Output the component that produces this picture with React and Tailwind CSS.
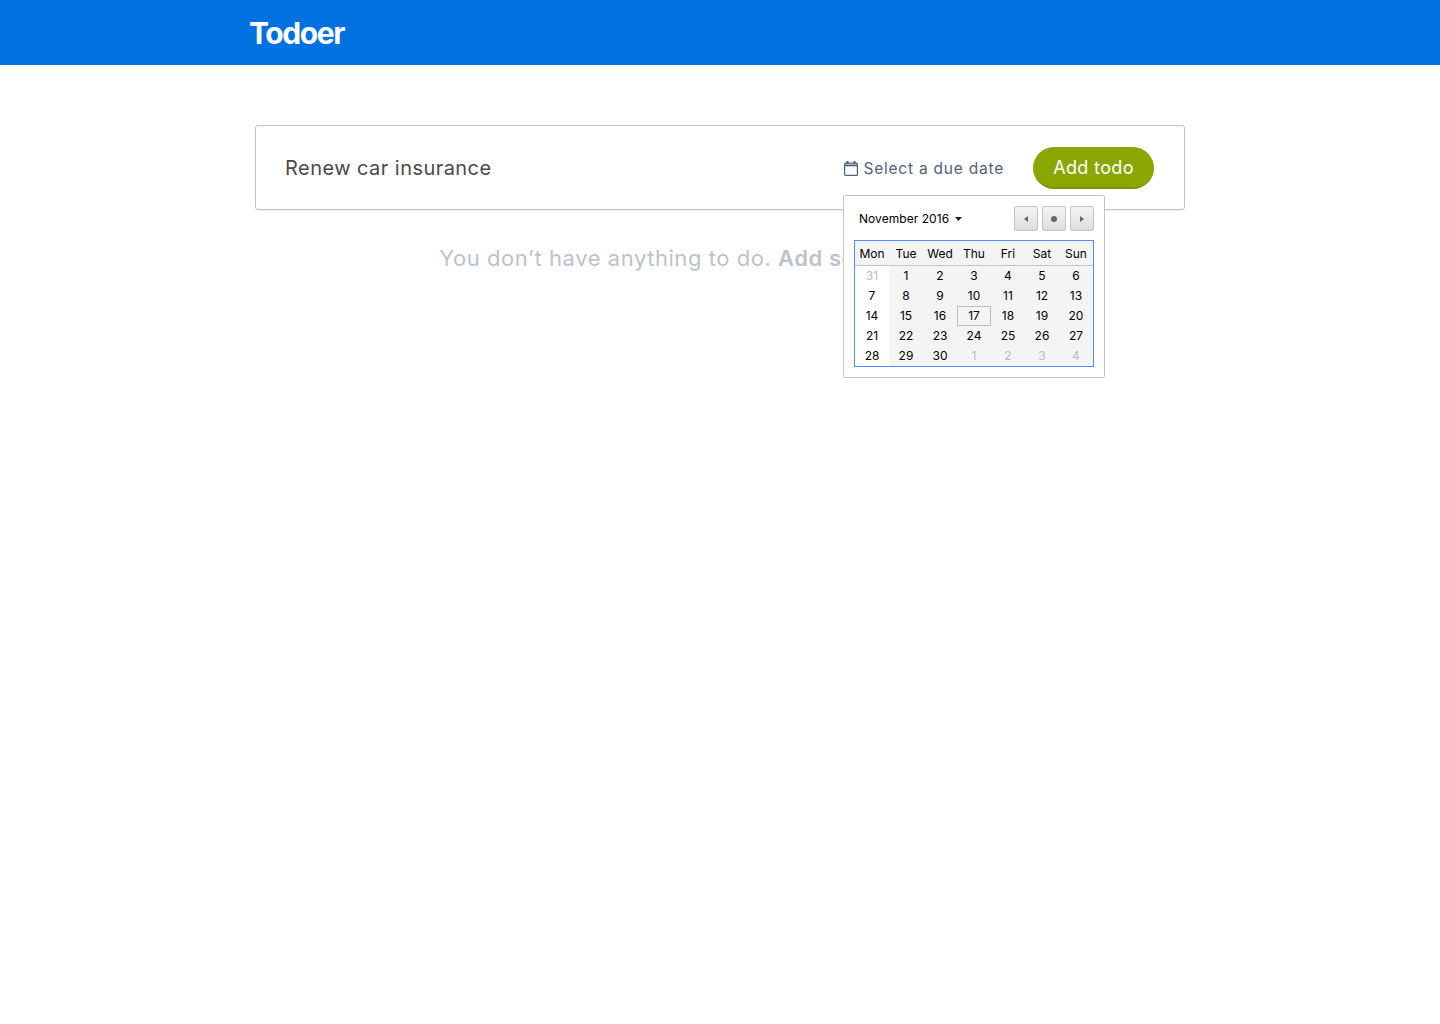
const sans = "font-['Inter','Noto_Sans',sans-serif]";
const weeks = [
  [[31, 1], [1], [2], [3], [4], [5], [6]],
  [[7], [8], [9], [10], [11], [12], [13]],
  [[14], [15], [16], [17], [18], [19], [20]],
  [[21], [22], [23], [24], [25], [26], [27]],
  [[28], [29], [30], [1, 1], [2, 1], [3, 1], [4, 1]],
];
const heads = ["Mon", "Tue", "Wed", "Thu", "Fri", "Sat", "Sun"];

function NavButton({ children }) {
  return (
    <button className="w-6 h-[25px] flex items-center justify-center rounded-[2px] border border-[#c4c4c4] bg-gradient-to-b from-[#f4f4f4] to-[#dedede]">
      {children}
    </button>
  );
}

function Calendar() {
  return (
    <div className="absolute left-[587px] top-[69px] w-[262px] h-[183px] bg-white border border-[#c4c4c4] rounded-[2px] px-[10px] pt-[10px] font-['Inter',sans-serif] text-[12px] text-black z-10">
      <div className="flex items-center justify-between h-[25px]">
        <div className="flex items-center gap-[6px] pl-[5px]">
          <span className="tracking-[0.05px]">November 2016</span>
          <svg width="7" height="4" viewBox="0 0 7 4"><path d="M0 0h7L3.5 4z" fill="#222" /></svg>
        </div>
        <div className="flex gap-1">
          <NavButton>
            <svg width="4" height="6" viewBox="0 0 4 6"><path d="M4 0v6L0 3z" fill="#666" /></svg>
          </NavButton>
          <NavButton><span className="w-[6px] h-[6px] rounded-full bg-[#666]" /></NavButton>
          <NavButton>
            <svg width="4" height="6" viewBox="0 0 4 6"><path d="M0 0v6l4-3z" fill="#666" /></svg>
          </NavButton>
        </div>
      </div>
      <div className="mt-[9px] w-[240px] border border-[#4d90fe] bg-[#f4f4f4]">
        <div className="grid grid-cols-7 h-[25px] items-center border-b border-[#c4c4c4] text-center leading-[15px] pt-[1px]">
          {heads.map((h) => <span key={h}>{h}</span>)}
        </div>
        {weeks.map((w, i) => (
          <div key={i} className="grid grid-cols-7">
            {w.map(([d, muted], j) => (
              <div
                key={j}
                className={`h-5 flex items-center justify-center ${j === 0 ? "bg-white" : ""} ${muted ? "text-[#bbbbbb]" : ""} ${d === 17 ? "border border-[#bbbbbb]" : ""}`}
              >
                {d}
              </div>
            ))}
          </div>
        ))}
      </div>
    </div>
  );
}

export default function App() {
  return (
    <div className={`min-h-[1024px] bg-white ${sans}`}>
      <header className="h-[65px] bg-[#0071de]">
        <div className="w-[940px] mx-auto h-full flex items-center">
          <span className="text-white text-[30px] font-bold tracking-[-1.4px] leading-none -ml-[1px] mt-[1px]">Todoer</span>
        </div>
      </header>
      <main className="w-[930px] mx-auto pt-[60px]">
        <div className="relative h-[85px] border border-[#c4c4c4] rounded-[3px] shadow-[0_1px_1px_rgba(0,0,0,0.06)] flex items-center pl-[29px] pr-[30px]">
          <span className="flex-1 text-[20px] text-[#4a4a4a] tracking-[0.45px]">Renew car insurance</span>
          <div className="flex items-center gap-[5px] text-[#4f6378] text-[15.5px] tracking-[0.78px] mr-[29px] mt-[2px]">
            <svg className="-mt-[1px]" width="14" height="15" viewBox="0 0 14 15" fill="none" stroke="#4f6378" strokeWidth="1.2">
              <rect x="0.6" y="2.1" width="12.8" height="12.3" rx="1" />
              <path d="M0.6 4.4h12.8" strokeWidth="1.8" />
              <path d="M3.5 0v3M10.5 0v3" strokeWidth="2" />
            </svg>
            <span>Select a due date</span>
          </div>
          <button className="w-[121px] h-[42px] rounded-full bg-[#89a700] border-b-2 border-[#7c9600] text-white text-[18px] tracking-[0.35px] pt-[1px]">
            Add todo
          </button>
          <Calendar />
        </div>
        <p className="mt-[32px] pl-[4px] text-center text-[22px] leading-[32px] text-[#bcc3cc] tracking-[0.55px]">
          You don’t have anything to do. <b className="font-semibold">Add something new.</b>
        </p>
      </main>
    </div>
  );
}
